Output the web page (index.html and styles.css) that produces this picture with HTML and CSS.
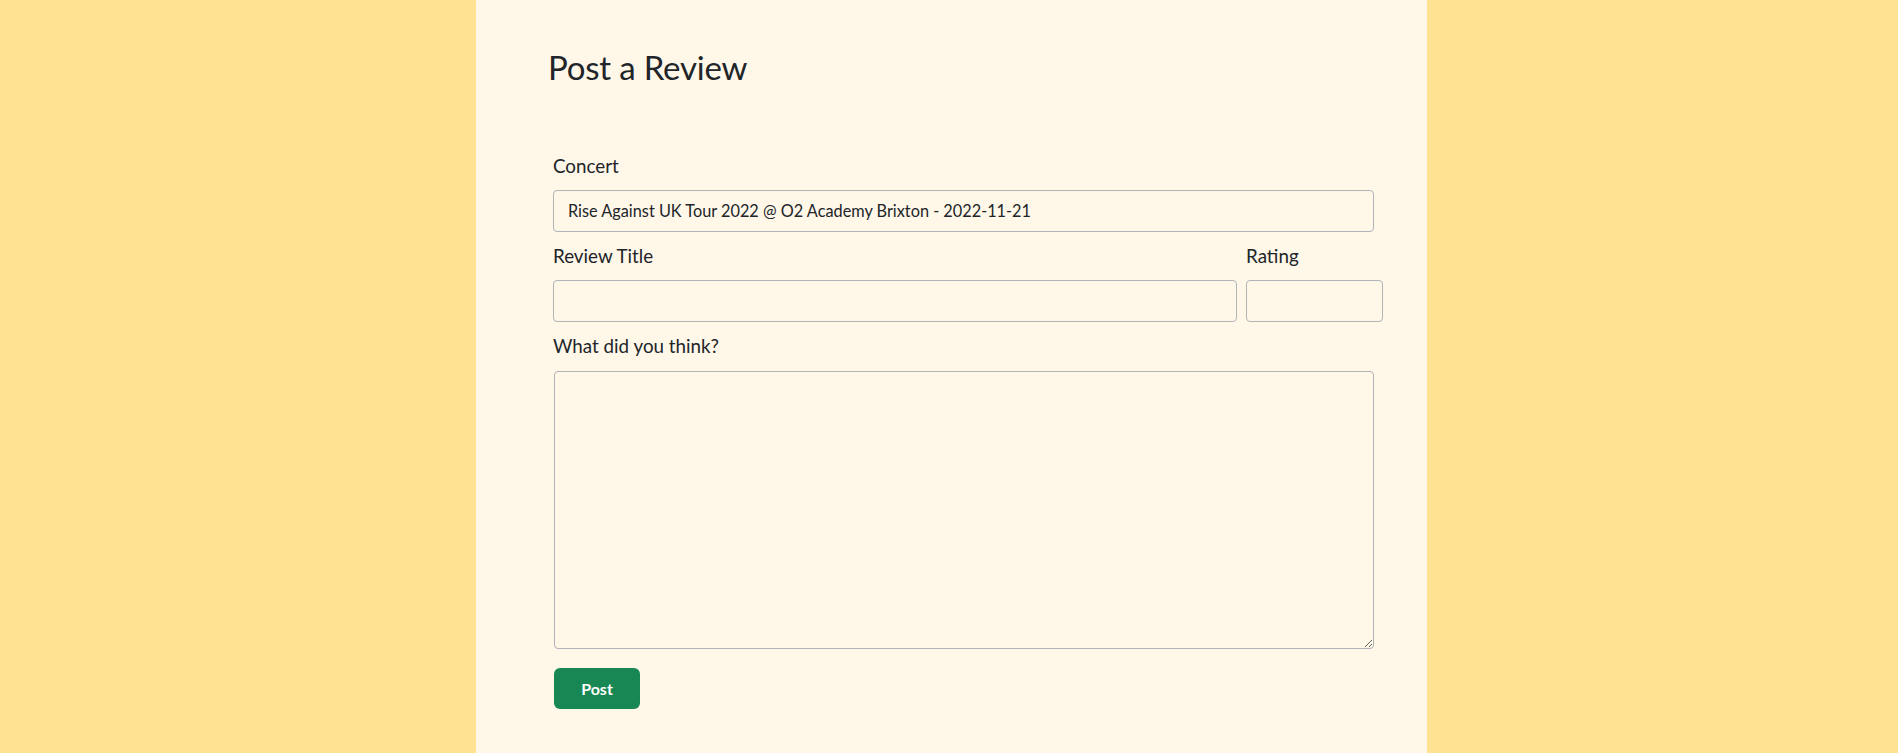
FILE: index.html
```html
<!DOCTYPE html>
<html lang="en">
<head>
<meta charset="utf-8">
<title>Post a Review</title>
<link rel="stylesheet" href="styles.css">
</head>
<body>
<div class="page">
  <main class="panel">
    <h1 class="title">Post a Review</h1>
    <form class="form">
      <label class="label" for="concert">Concert</label>
      <div class="select" id="concert">Rise Against UK Tour 2022 @ O2 Academy Brixton - 2022-11-21</div>
      <div class="row">
        <div class="col-title">
          <label class="label" for="rtitle">Review Title</label>
          <input class="input" id="rtitle" type="text">
        </div>
        <div class="col-rating">
          <label class="label" for="rating">Rating</label>
          <input class="input" id="rating" type="text">
        </div>
      </div>
      <label class="label" for="body">What did you think?</label>
      <textarea class="textarea" id="body"></textarea>
      <button class="btn" type="button">Post</button>
    </form>
  </main>
</div>
</body>
</html>
```

FILE: styles.css
```css
html, body {
  margin: 0;
  padding: 0;
  background: #ffe392;
  font-family: "Lato", "Open Sans", sans-serif;
  color: #212529;
}
.page {
  display: flex;
  height: 753px;
  overflow: hidden;
}
.panel {
  margin-left: 476px;
  width: 951px;
  background: #fff7e8;
  box-sizing: border-box;
  padding: 46px 0 0 72px;
}
.title {
  margin: 0;
  font-size: 33px;
  line-height: 42px;
  font-weight: 400;
  letter-spacing: -0.2px;
}
.form {
  margin: 66px 0 0 5px;
  width: 830px;
  display: flex;
  flex-direction: column;
}
.label {
  display: block;
  font-size: 18.8px;
  line-height: 24px;
  margin-bottom: 12px;
}
.select {
  box-sizing: border-box;
  width: 821px;
  height: 42px;
  border: 1px solid #b0b4b8;
  border-radius: 4px;
  padding: 0 14px;
  font-size: 16.3px;
  line-height: 39px;
  color: #212529;
  margin-bottom: 12px;
}
.row {
  display: flex;
  gap: 9px;
  margin-bottom: 12px;
}
.col-title { width: 684px; }
.col-rating { width: 137px; }
.input {
  display: block;
  box-sizing: border-box;
  width: 100%;
  height: 42px;
  border: 1px solid #b0b4b8;
  border-radius: 4px;
  background: transparent;
  margin: 0;
  font: inherit;
}
.textarea {
  display: block;
  box-sizing: border-box;
  width: 820px;
  height: 278px;
  margin: 1px 0 0 1px;
  border: 1px solid #b0b4b8;
  border-radius: 4px;
  background: transparent;
  font: inherit;
}
.btn {
  align-self: flex-start;
  margin: 19px 0 0 1px;
  width: 86px;
  height: 41px;
  border: none;
  border-radius: 6px;
  background: #198754;
  color: #fff;
  font-family: "Lato", sans-serif;
  font-weight: 700;
  font-size: 16px;
}
```
